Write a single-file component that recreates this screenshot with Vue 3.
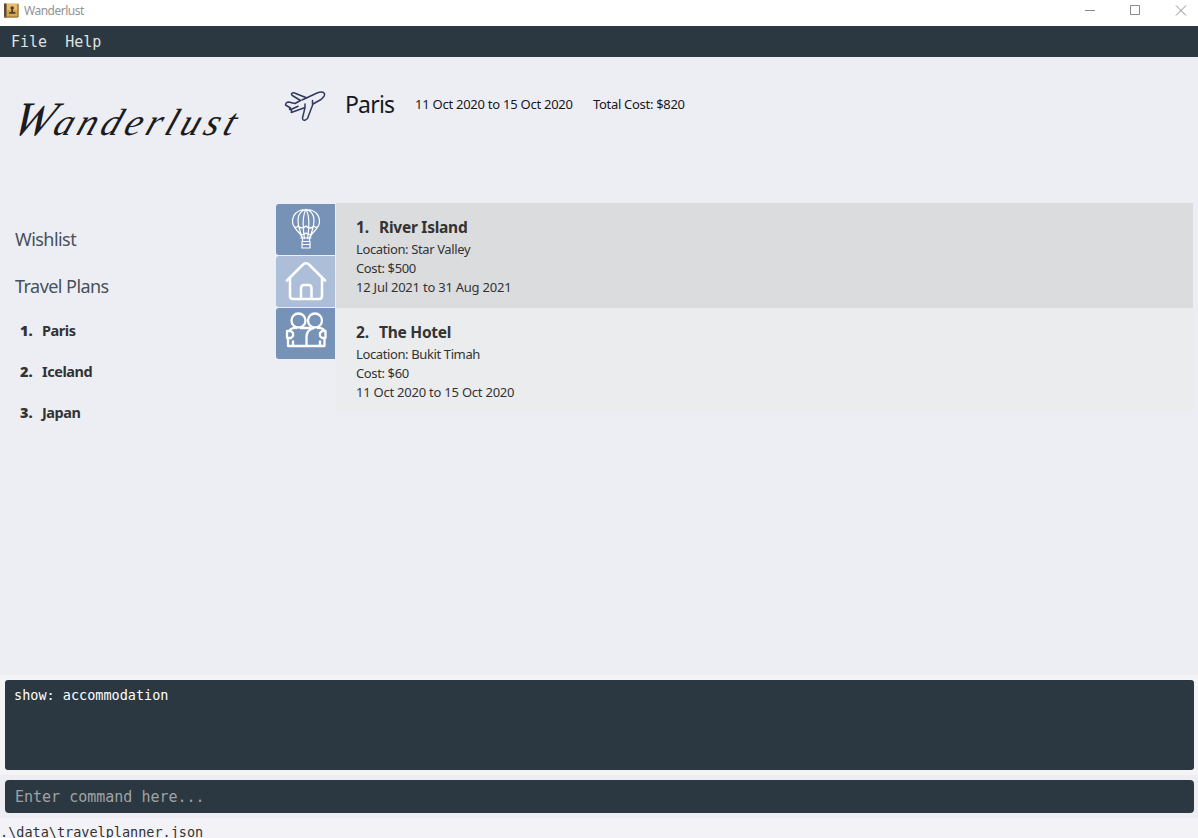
<script setup>
const plans = ['Paris', 'Iceland', 'Japan']
const stays = [
  { name: 'River Island', place: 'Star Valley', cost: '$500', dates: '12 Jul 2021 to 31 Aug 2021' },
  { name: 'The Hotel', place: 'Bukit Timah', cost: '$60', dates: '11 Oct 2020 to 15 Oct 2020' },
]
</script>

<template>
  <div class="window">
    <header class="titlebar">
      <svg class="app-icon" width="16" height="16" viewBox="0 0 16 16">
        <rect x="0.5" y="0.5" width="14" height="14" rx="1" fill="#d9a44e" />
        <rect x="3" y="1" width="10" height="6" fill="#e9bc6d" />
        <rect x="0" y="0.5" width="2.5" height="14" fill="#59483b" />
        <path d="M0 14H14V1" fill="none" stroke="#8b6a39" />
        <circle cx="8.2" cy="5" r="1.8" fill="#4c4031" />
        <path d="M7.400 6h1.600v2.700l2.500.5v1.500H5V9.200l2.400-.5z" fill="#4c4031" />
      </svg>
      <span class="app-name">Wanderlust</span>
      <svg class="controls" width="104" height="12" viewBox="0 0 104 12" fill="none" stroke="#8b8b8b">
        <path d="M0 5.5h10M45.500.5h9v9h-9zM91 .5l10 10M101 .5l-10 10" />
      </svg>
    </header>
    <nav class="menu"><span>File</span><span>Help</span></nav>

    <main class="content">
      <aside class="sidebar">
        <div class="logo">Wanderlust</div>
        <div class="heading wish">Wishlist</div>
        <div class="heading travel">Travel Plans</div>
        <ol class="plans">
          <li v-for="(p, i) in plans" :key="p"><b>{{ i + 1 }}.</b><span>{{ p }}</span></li>
        </ol>
      </aside>

      <section class="details">
        <div class="summary">
          <svg class="plane" width="42" height="32" viewBox="0 0 42 32" fill="none" stroke="#303a60" stroke-width="1.5" stroke-linejoin="round" stroke-linecap="round">
            <path d="M23 7L10.500 2Q8 1.200 7.500 3Q7.300 4 8.300 4.500L16.500 9.500L11 12.500L4.500 11Q2 11 1.500 14L6.500 17L5.500 18.300L7.500 19L7.300 21.500L21 16.500L18.500 27Q18.500 30 21.500 29L23.500 27.500L29 13L37 8.500Q42 4.500 40 2Q38 0 33 2L18 9M7.500 18.300L14 15.300M21 13V16.500M28.500 9.500V13.500" />
          </svg>
          <h1>Paris</h1>
          <span class="dates">11 Oct 2020 to 15 Oct 2020</span>
          <span class="total">Total Cost: $820</span>
        </div>
        <div class="board">
          <div class="tabs">
            <div class="tab">
              <svg width="42" height="42" viewBox="0 0 42 42" fill="none" stroke="#fff" stroke-width="1.200">
                <path d="M17.500 30L15 26C12 22 7.500 19 7.500 13.500C7.500 6 13 1.500 21 1.500S34.500 6 34.500 13.500C34.500 19 30 22 27 26L24.500 30M8 17Q11 21 13 18Q17 22 21 18Q25 22 29 18Q31 21 34 17M14 25Q17.500 28 21 25Q24.500 28 28 25M17.500 30C15 24 13 18 13 12C13 6 17 2 21 1.500C25 2 29 6 29 12C29 18 27 24 24.500 30M19.500 31C18 21 17 8 21 1.500C25 8 24 21 22.500 31M15.500 30h11M17.500 30v3M24.500 30v3M17 33.500h8v6.500h-8zM17 36.500h8" />
              </svg>
            </div>
            <div class="tab active">
              <svg width="42" height="42" viewBox="0 0 42 42" fill="none" stroke="#fff" stroke-width="2.500" stroke-linejoin="round" stroke-linecap="round">
                <path d="M2 20.500L17.500 5Q21 1.500 24.500 5L40 20.500M5 18v18Q5 39 8 39H34Q37 39 37 36V18M16 38.500V28.500Q16 25 19 25H23.500Q26.500 25 26.500 28.500V38.500" />
              </svg>
            </div>
            <div class="tab">
              <svg width="42" height="42" viewBox="0 0 42 42" fill="none" stroke="#fff" stroke-width="2.300" stroke-linejoin="round">
                <circle cx="13.500" cy="8.500" r="7" /><circle cx="30" cy="8.500" r="7" />
                <path d="M12 16Q6 15.500 4.500 19M15 16H26M32 16Q38 15.500 39.500 19M21.500 34V25Q21.500 18 29 16M2 19H6L8 21V24L6 26H2ZM40.500 19H37L35 21V24L37 26H40.500ZM3 26V34H39.500V26M8 28.500V34M35 28.500V34" />
              </svg>
            </div>
          </div>
          <div class="cards">
            <article v-for="(s, i) in stays" :key="s.name" class="card" :class="{ selected: i === 0 }">
              <h2><span>{{ i + 1 }}.</span>{{ s.name }}</h2>
              <p>Location: {{ s.place }}</p>
              <p>Cost: {{ s.cost }}</p>
              <p class="range">{{ s.dates }}</p>
            </article>
          </div>
        </div>
      </section>
    </main>

    <section class="result"><div class="output">show: accommodation</div></section>
    <section class="command"><div class="entry">Enter command here...</div></section>
    <footer class="status">.\data\travelplanner.json</footer>
  </div>
</template>

<style>
body { margin: 0; overflow: hidden; }
</style>

<style scoped>
* { box-sizing: border-box; }
.window { width: 1198px; height: 838px; overflow: hidden; display: flex; flex-direction: column; background: #edeef4; color: #333; font-family: "Noto Sans", "Open Sans", sans-serif; white-space: nowrap; }
.titlebar { height: 26px; flex: none; display: flex; background: #fff; padding: 3px 9px 0 4px; }
.app-name { margin-left: 4px; font-size: 12px; line-height: 16px; color: #929292; letter-spacing: -0.5px; }
.controls { margin: 2px 0 0 auto; }
.menu { height: 31px; flex: none; display: flex; gap: 18px; padding-left: 11px; background: #2c3841; color: #dfe1e2; font: 15px/32px "DejaVu Sans Mono", monospace; }
.content { height: 618px; flex: none; display: flex; }
.sidebar { width: 276px; flex: none; padding-left: 15px; }
.logo { width: 230px; height: 46px; margin-top: 39px; font: italic 38px/46px "Liberation Serif", serif; letter-spacing: 4.600px; color: #1b1b20; transform: skewX(-20deg); }
.logo::first-letter { font-size: 48px; letter-spacing: 2px; }
.heading { font-size: 18px; line-height: 24px; color: #46515b; }
.wish { margin-top: 85px; letter-spacing: -0.55px; }
.travel { margin-top: 23px; letter-spacing: -0.55px; }
.plans { list-style: none; margin: 12px 0 0; padding: 0 0 0 5px; font-size: 14.500px; font-weight: 700; }
.plans li { height: 41px; display: flex; line-height: 41px; letter-spacing: -0.45px; }
.plans b { width: 22px; letter-spacing: 0; }
.details { flex: 1; padding-right: 5px; }
.summary { height: 146px; display: flex; align-items: flex-start; padding: 33px 0 0 8px; color: #17181c; font-size: 13px; line-height: 28px; }
.plane { flex: none; margin-top: 1px; }
h1 { width: 50px; margin: 0 0 0 19px; font-weight: 400; font-size: 23px; line-height: 28px; letter-spacing: -0.8px; }
.dates { width: 158px; margin-left: 20px; letter-spacing: -0.25px; }
.total { margin-left: 20px; letter-spacing: -0.3px; }
.board { display: flex; gap: 1px; }
.tabs { width: 59px; flex: none; display: flex; flex-direction: column; gap: 1px; padding-top: 1px; }
.tab { height: 51px; padding: 4px 0 0 9px; background: #7692b7; border-radius: 3px 0 0 3px; }
.tab.active { background: #adbed8; }
.cards { flex: 1; }
.card { height: 105px; padding: 14px 20px 0; background: #ebecee; }
.card.selected { background: #dbdcde; }
h2 { margin: 0 0 2px; font-size: 15.500px; line-height: 21px; letter-spacing: -0.25px; display: flex; }
h2 span { width: 23px; letter-spacing: 0; }
p { margin: 0; font-size: 13px; line-height: 19px; letter-spacing: -0.38px; }
.range { letter-spacing: -0.23px; }
.result { height: 100px; flex: none; padding: 5px 4px 5px 5px; background: #f4f4f5; }
.output { height: 90px; border-radius: 3px; background: #2c3841; color: #fff; padding: 6px 9px; font: 13.500px/19px "DejaVu Sans Mono", monospace; }
.command { height: 43px; flex: none; padding: 5px 4px 5px 5px; }
.entry { height: 33px; border-radius: 4px; background: #2c3841; color: #a0a3a6; padding-left: 10px; font: 15px/34px "DejaVu Sans Mono", monospace; }
.status { flex: 1; padding-top: 5px; background: #f2f2f7; font: 13.500px/18px "DejaVu Sans Mono", monospace; }
</style>
